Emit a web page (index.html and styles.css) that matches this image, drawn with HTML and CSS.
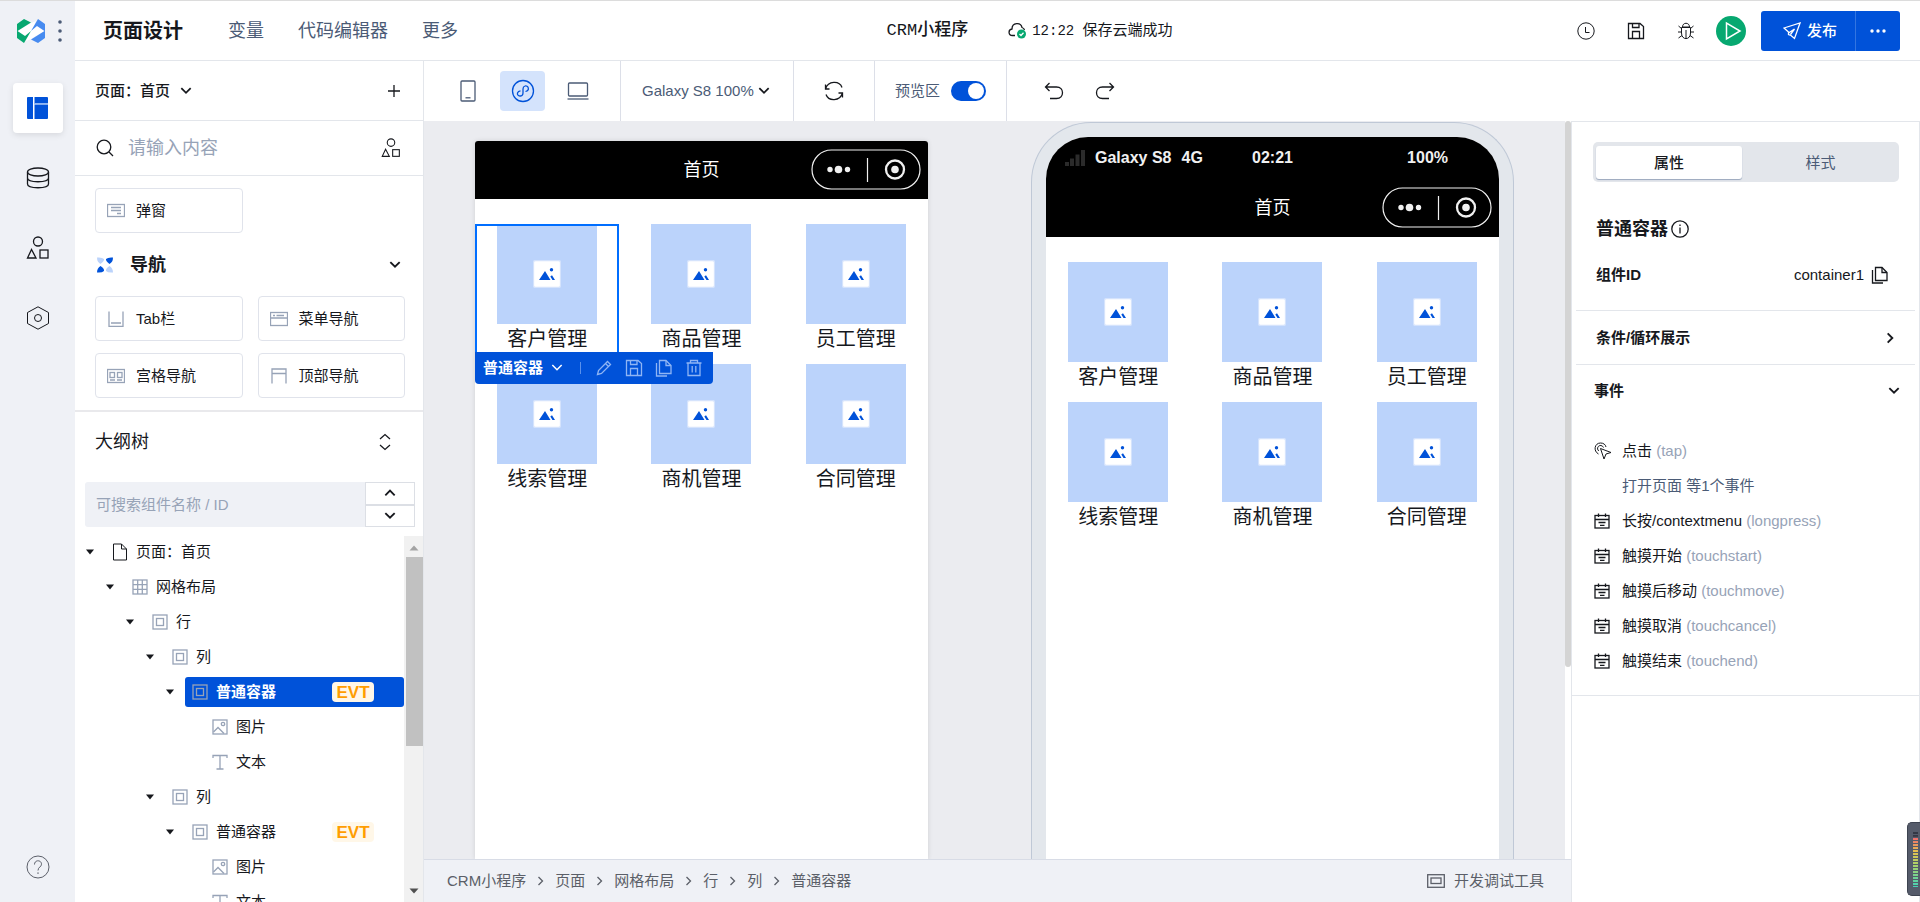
FILE: index.html
```html
<!DOCTYPE html>
<html lang="zh-CN">
<head>
<meta charset="utf-8">
<title>页面设计 - CRM小程序</title>
<link rel="stylesheet" href="styles.css">
</head>
<body>
<svg class="sprite" aria-hidden="true">
  <symbol id="chev-down" viewBox="0 0 12 12"><path d="M2 3.5 6 7.5 10 3.5"/></symbol>
  <symbol id="chev-up" viewBox="0 0 12 12"><path d="M2 8 6 4 10 8"/></symbol>
  <symbol id="chev-right" viewBox="0 0 12 12"><path d="M4 2 8 6 4 10"/></symbol>
  <symbol id="caret" viewBox="0 0 10 6"><path d="M1 0.5h8L5 5.5z" fill="currentColor" stroke="none"/></symbol>
  <symbol id="shapes" viewBox="0 0 24 24"><circle cx="12" cy="5.5" r="4.5"/><path d="M5.500 13.500 1.500 22h8.500z"/><rect x="14" y="14" width="8" height="8"/></symbol>
  <symbol id="save" viewBox="0 0 18 18"><path d="M1.500 1.500H13L16.500 4.500V16.500H1.500z"/><path d="M5.500 1.500V5.500H12V1.500M5.500 16.500V9.500H12.500V16.500"/></symbol>
  <symbol id="copy" viewBox="0 0 18 18"><path d="M4.500 1.500H11L16 6.500V14.500H4.500z"/><path d="M11 1.500V6.500H16M1.500 4V17H12"/></symbol>
  <symbol id="box" viewBox="0 0 16 16"><rect x="1" y="1" width="14" height="14"/><rect x="4.500" y="4.500" width="7" height="7"/></symbol>
  <symbol id="grid" viewBox="0 0 16 16"><rect x="1" y="1" width="14" height="14"/><path d="M5.700 1V15M10.300 1V15M1 5.700H15M1 10.300H15"/></symbol>
  <symbol id="file" viewBox="0 0 16 18"><path d="M1.500 1H9.500L14.500 6V17H1.500z"/><path d="M9.500 1V6H14.500"/></symbol>
  <symbol id="image" viewBox="0 0 16 16"><rect x="1" y="1" width="14" height="14"/><circle cx="11" cy="5" r="1.700"/><path d="M1.500 13 6 8.500 12 14.500"/></symbol>
  <symbol id="letter" viewBox="0 0 16 16"><path d="M1 4V1.500H15V4M8 1.500V15M4.500 15H11.500"/></symbol>
  <symbol id="calendar" viewBox="0 0 16 16"><rect x="1" y="2.500" width="14" height="12.500"/><path d="M1 6.500H15M4.500 0.500V4M11.500 0.500V4M4.500 9.500H11.500M6 12.300H10.500"/></symbol>
  <symbol id="photo" viewBox="0 0 28 28"><rect x="0.500" y="0.500" width="27" height="27" rx="2" fill="#fff" stroke="#d5e3fc"/><path d="M6 20 12 11 17.500 20zM17.300 16.500 19 15.200 22 20H19.500z" fill="#0052d9" stroke="none"/><circle cx="18.500" cy="9.800" r="1.700" fill="#0052d9" stroke="none"/></symbol>
  <symbol id="capsule" viewBox="0 0 110 42"><rect x="1" y="1" width="108" height="39" rx="19.500" stroke-width="1.200"/><path d="M56.500 9V33" stroke-width="1.200"/><g fill="currentColor" stroke="none"><circle cx="19" cy="20.500" r="2.700"/><circle cx="27.500" cy="20.500" r="3.800"/><circle cx="36.500" cy="20.500" r="2.700"/><circle cx="84" cy="20.500" r="3.800"/></g><circle cx="84" cy="20.500" r="9" stroke-width="2.300"/></symbol>
</svg>

<div class="app">
  <nav class="rail" aria-label="主导航">
    <div class="brand">
      <svg class="logo" viewBox="0 0 28 24"><path d="M0.500 12 14 4 19 2 17 7 20 7 27.500 12 14 20 9 22 11 17 8 17z" fill="#fff"/><path d="M0 5 7 0 14 3.500 0.500 12 8 17 14 12 7 24 0 19z" fill="#07a870"/><path d="M28 19 21 24 14 20.500 27.500 12 20 7 14 12 21 0 28 5z" fill="#478bf0"/></svg>
      <button class="plain" aria-label="菜单"><svg class="dots" viewBox="0 0 4 22"><circle cx="2" cy="2" r="1.800"/><circle cx="2" cy="11" r="1.800"/><circle cx="2" cy="20" r="1.800"/></svg></button>
    </div>
    <button class="tile tile-active" aria-label="页面设计"><svg class="i22" viewBox="0 0 22 22"><g fill="#0052d9" stroke="none"><path d="M1 0H6V22H1Q0 22 0 21V1Q0 0 1 0z"/><path d="M7.500 0H20Q21 0 21 1V6H7.500z"/><path d="M7.500 7.500H21V21Q21 22 20 22H7.500z"/></g><path d="M7 6.700H21" stroke="#8bb3f3"/></svg></button>
    <button class="tile" aria-label="数据"><svg class="i24" viewBox="0 0 24 24"><ellipse cx="12" cy="6" rx="10.500" ry="4"/><path d="M1.500 6V18C1.500 23 22.500 23 22.500 18V6M1.500 12C1.500 17 22.500 17 22.500 12"/></svg></button>
    <button class="tile" aria-label="组件"><svg class="i24"><use href="#shapes"/></svg></button>
    <button class="tile" aria-label="设置"><svg class="i24 thin" viewBox="0 0 24 24"><path d="M12 0.800 22.500 6.500V17.500L12 23.200 1.500 17.500V6.500z"/><circle cx="12" cy="12" r="3.500"/></svg></button>
    <button class="tile rail-help" aria-label="帮助"><svg class="i24 thin" viewBox="0 0 24 24"><circle cx="12" cy="12" r="11"/><path d="M8.500 9.500C8.500 4.500 15.500 4.700 15.500 9.200 15.500 12 12 12 12 15.500M12 17.300V19"/></svg></button>
  </nav>

  <header class="topbar">
    <h1 class="app-title">页面设计</h1>
    <nav class="menu"><a href="#">变量</a><a href="#">代码编辑器</a><a href="#">更多</a></nav>
    <div class="status">
      <strong class="app-name">CRM小程序</strong>
      <svg class="cloud" viewBox="0 0 18 17"><path d="M7 13.500H4.500C0 13.500 0 7.500 4 7 4 0 13 0 14 5.500 15.500 6 16.300 7 16.500 8"/><circle cx="13.500" cy="12" r="4.500" fill="#07a870" stroke="none"/><path d="M11.500 12 13 13.500 15.500 10.800" stroke="#fff"/></svg>
      <span class="saved"><time>12:22</time> 保存云端成功</span>
    </div>
    <div class="actions">
      <button class="plain" aria-label="历史"><svg class="i18 thin" viewBox="0 0 18 18"><circle cx="9" cy="9" r="8.200"/><path d="M8.500 5V10.500H12.500"/></svg></button>
      <button class="plain" aria-label="保存"><svg class="i18"><use href="#save"/></svg></button>
      <button class="plain" aria-label="调试"><svg class="i18 thin" viewBox="0 0 18 18"><path d="M5.500 5C5.500 0 12.500 0 12.500 5zM4.500 5.500H13.500V11C13.500 18.500 4.500 18.500 4.500 11zM9 8V16M4.500 10H1M13.500 10H17M4.500 6.500 1.500 4M13.500 6.500 16.500 4M5 13.500 1.500 16M13 13.500 16.500 16"/></svg></button>
      <button class="plain run" aria-label="运行"><svg class="play" viewBox="0 0 30 30"><circle cx="15" cy="15" r="15" fill="#07a870" stroke="none"/><path d="M10.500 7V23L24 15z" stroke="#fff" stroke-width="1.500"/></svg></button>
      <div class="publish">
        <button class="publish-main"><svg class="i18" viewBox="0 0 18 18"><path d="M1 6 17 1 11.500 16.500 8 13.500 5.500 12.500V10zM5.500 11 11.500 7 7.500 12.500"/></svg>发布</button>
        <button class="publish-more" aria-label="更多发布选项"><svg viewBox="0 0 16 4"><circle cx="2" cy="2" r="1.700"/><circle cx="8" cy="2" r="1.700"/><circle cx="14" cy="2" r="1.700"/></svg></button>
      </div>
    </div>
  </header>

  <aside class="side">
    <div class="page-row">
      <label class="picker picker-bold"><select aria-label="页面"><option>页面：首页</option></select><svg class="i14"><use href="#chev-down"/></svg></label>
      <button class="plain" aria-label="新建页面"><svg class="i14" viewBox="0 0 14 14"><path d="M7 1V13M1 7H13"/></svg></button>
    </div>
    <div class="find-row">
      <svg class="i18" viewBox="0 0 18 18"><circle cx="8" cy="8" r="6.800"/><path d="M13 13 17 17"/></svg>
      <input type="text" aria-label="搜索组件" placeholder="请输入内容">
      <button class="plain" aria-label="组件库"><svg class="i20"><use href="#shapes"/></svg></button>
    </div>
    <div class="library">
      <div class="cards">
        <button class="card"><svg viewBox="0 0 18 16"><rect x="0.500" y="1.500" width="17" height="12"/><path d="M4 4.500H14M4 7.500H14M10 10.500H14"/></svg>弹窗</button>
      </div>
      <div class="group">
        <svg class="group-icon" viewBox="0 0 16 16"><path d="M0 0.500Q5 0 7 2 7.500 4 3.500 7 0 5 0 0.500z" fill="#bbd3fb"/><path d="M16 0.500Q11 0 9 2 8.500 4 12.500 7 16 5 16 0.500zM0 15.500Q0 11 3.500 9 7.500 11.500 7 14 5 16 0 15.500z" fill="#0052d9"/><path d="M16 15.500Q16 11 12.500 9 8.500 11.500 9 14 11 16 16 15.500z" fill="#bbd3fb"/></svg>
        <h2>导航</h2>
        <button class="plain" aria-label="折叠导航"><svg class="i14"><use href="#chev-down"/></svg></button>
      </div>
      <div class="cards">
        <button class="card"><svg viewBox="0 0 18 16"><path d="M2 0.500V15.500H16V0.500M4 12H14"/></svg>Tab栏</button>
        <button class="card"><svg viewBox="0 0 18 16"><rect x="0.500" y="1.500" width="17" height="13"/><path d="M0.500 7H17.500M3 4.500H5M6.500 4.500H14"/></svg>菜单导航</button>
        <button class="card"><svg viewBox="0 0 18 16"><rect x="0.500" y="1.500" width="17" height="13"/><rect x="3" y="4.500" width="4.500" height="5"/><rect x="10.500" y="4.500" width="4.500" height="5"/><path d="M3 12H8M10 12H15"/></svg>宫格导航</button>
        <button class="card"><svg viewBox="0 0 18 16"><path d="M2 15.500V1H16V15.500M2 5.500H16"/></svg>顶部导航</button>
        <button class="card" aria-label="侧边导航"></button>
        <button class="card" aria-label="步骤导航"></button>
      </div>
    </div>
    <div class="outline-head">
      <h2>大纲树</h2>
      <button class="plain" aria-label="展开或收起"><svg class="i18" viewBox="0 0 18 18"><path d="M4 6 9 1.500 14 6M4 12 9 16.500 14 12"/></svg></button>
    </div>
    <div class="outline-find">
      <input type="text" aria-label="搜索大纲" placeholder="可搜索组件名称 / ID">
      <div class="stepper">
        <button aria-label="上一个"><svg class="i14"><use href="#chev-up"/></svg></button>
        <button aria-label="下一个"><svg class="i14"><use href="#chev-down"/></svg></button>
      </div>
    </div>
    <div class="outline-body">
      <ul class="tree" role="tree">
        <li class="node lv1" role="treeitem"><svg class="caret"><use href="#caret"/></svg><span class="leaf dark"><svg><use href="#file"/></svg>页面：首页</span></li>
        <li class="node lv2" role="treeitem"><svg class="caret"><use href="#caret"/></svg><span class="leaf"><svg><use href="#grid"/></svg>网格布局</span></li>
        <li class="node lv3" role="treeitem"><svg class="caret"><use href="#caret"/></svg><span class="leaf"><svg><use href="#box"/></svg>行</span></li>
        <li class="node lv4" role="treeitem"><svg class="caret"><use href="#caret"/></svg><span class="leaf"><svg><use href="#box"/></svg>列</span></li>
        <li class="node lv5" role="treeitem" aria-selected="true"><svg class="caret"><use href="#caret"/></svg><span class="leaf selected"><svg><use href="#box"/></svg>普通容器<b class="evt">EVT</b></span></li>
        <li class="node lv6" role="treeitem"><span class="caret"></span><span class="leaf"><svg><use href="#image"/></svg>图片</span></li>
        <li class="node lv6" role="treeitem"><span class="caret"></span><span class="leaf"><svg><use href="#letter"/></svg>文本</span></li>
        <li class="node lv4" role="treeitem"><svg class="caret"><use href="#caret"/></svg><span class="leaf"><svg><use href="#box"/></svg>列</span></li>
        <li class="node lv5" role="treeitem"><svg class="caret"><use href="#caret"/></svg><span class="leaf"><svg><use href="#box"/></svg>普通容器<b class="evt">EVT</b></span></li>
        <li class="node lv6" role="treeitem"><span class="caret"></span><span class="leaf"><svg><use href="#image"/></svg>图片</span></li>
        <li class="node lv6" role="treeitem"><span class="caret"></span><span class="leaf"><svg><use href="#letter"/></svg>文本</span></li>
      </ul>
      <div class="scroll" aria-hidden="true">
        <svg class="scroll-arrow" viewBox="0 0 10 6"><path d="M5 0.500 9.500 5.500H0.500z" fill="#a3a3a3"/></svg>
        <div class="scroll-thumb"></div>
        <svg class="scroll-arrow scroll-end" viewBox="0 0 10 6"><path d="M0.500 0.500H9.500L5 5.500z" fill="#505050"/></svg>
      </div>
    </div>
  </aside>

  <div class="toolbar">
    <div class="tools devices">
      <button class="device-btn" aria-label="手机"><svg class="i24" viewBox="0 0 24 24"><rect x="5" y="2" width="14" height="20" rx="1"/><path d="M9.500 18.800H14.500"/></svg></button>
      <button class="device-btn device-on" aria-label="小程序"><svg class="i24" viewBox="0 0 24 24"><circle cx="12" cy="12" r="10.500"/><path d="M14.500 12.500C19.500 11 17 6 14 7 12 7.600 12 9 12 10V14C12 18.500 5.500 17.500 6.500 14 7 12.500 8 12 9.500 11.800"/></svg></button>
      <button class="device-btn" aria-label="桌面"><svg class="i24" viewBox="0 0 24 24"><rect x="2.500" y="4" width="19" height="13" rx="1"/><path d="M1.500 20H22.500"/></svg></button>
    </div>
    <div class="tools zoom"><label class="picker"><select aria-label="机型与缩放"><option>Galaxy S8 100%</option></select><svg class="i14"><use href="#chev-down"/></svg></label></div>
    <div class="tools refresh"><button class="plain" aria-label="刷新"><svg class="i20" viewBox="0 0 20 20"><path d="M1.500 8C4 -0.500 15.500 -0.500 18 6.500M1.500 3.500V8H5.500M18.500 12C16 20.500 4.500 20.500 2 13.500M18.500 16.500V12H14.500"/></svg></button></div>
    <div class="tools"><label class="preview">预览区<input class="switch" type="checkbox" role="switch" checked></label></div>
    <div class="tools history">
      <button class="plain" aria-label="撤销"><svg class="i20" viewBox="0 0 20 20"><path d="M5.500 2 1.500 6 5.500 10M1.500 6H12.500C20.500 6 20.500 17.500 12.500 17.500H6"/></svg></button>
      <button class="plain" aria-label="重做"><svg class="i20" viewBox="0 0 20 20"><path d="M14.500 2 18.500 6 14.500 10M18.500 6H7.500C-0.500 6 -0.500 17.500 7.500 17.500H14"/></svg></button>
    </div>
  </div>

  <main class="canvas">
    <div class="stage">
      <section class="screen editor">
        <div class="nav"><span>首页</span><svg class="capsule"><use href="#capsule"/></svg></div>
        <div class="apps">
          <div class="app-item picked"><div class="pic"><svg><use href="#photo"/></svg></div>客户管理
            <div class="float-bar">
              <button class="float-name">普通容器<svg class="i14"><use href="#chev-down"/></svg></button>
              <span class="float-sep"></span>
              <button class="plain" aria-label="编辑"><svg class="i18" viewBox="0 0 18 18"><path d="M2.500 15.500 3.500 11.500 12.500 2.500 15.500 5.500 6.500 14.500zM10.500 4.500 13.500 7.500"/></svg></button>
              <button class="plain" aria-label="保存组件"><svg class="i18"><use href="#save"/></svg></button>
              <button class="plain" aria-label="复制"><svg class="i18"><use href="#copy"/></svg></button>
              <button class="plain" aria-label="删除"><svg class="i18" viewBox="0 0 18 18"><path d="M1.500 4H16.500M5.500 4V1.500H12.500V4M3 4V16.500H15V4M7.200 7V13.500M10.800 7V13.500"/></svg></button>
            </div>
          </div>
          <div class="app-item"><div class="pic"><svg><use href="#photo"/></svg></div>商品管理</div>
          <div class="app-item"><div class="pic"><svg><use href="#photo"/></svg></div>员工管理</div>
          <div class="app-item"><div class="pic"><svg><use href="#photo"/></svg></div>线索管理</div>
          <div class="app-item"><div class="pic"><svg><use href="#photo"/></svg></div>商机管理</div>
          <div class="app-item"><div class="pic"><svg><use href="#photo"/></svg></div>合同管理</div>
        </div>
      </section>
      <section class="phone">
        <div class="screen">
          <div class="phone-status">
            <span class="carrier"><svg viewBox="0 0 20 16"><path d="M0 12h4v4H0zM5 8.500h4V16H5zM10.500 4.500h4V16h-4zM16 0h4v16h-4z" fill="#2b2b2b"/></svg>Galaxy S8<span>4G</span></span>
            <span>02:21</span>
            <span class="battery">100%</span>
          </div>
          <div class="nav"><span>首页</span><svg class="capsule"><use href="#capsule"/></svg></div>
          <div class="apps">
            <div class="app-item"><div class="pic"><svg><use href="#photo"/></svg></div>客户管理</div>
            <div class="app-item"><div class="pic"><svg><use href="#photo"/></svg></div>商品管理</div>
            <div class="app-item"><div class="pic"><svg><use href="#photo"/></svg></div>员工管理</div>
            <div class="app-item"><div class="pic"><svg><use href="#photo"/></svg></div>线索管理</div>
            <div class="app-item"><div class="pic"><svg><use href="#photo"/></svg></div>商机管理</div>
            <div class="app-item"><div class="pic"><svg><use href="#photo"/></svg></div>合同管理</div>
          </div>
        </div>
      </section>
    </div>
    <div class="stage-scroll" aria-hidden="true"><div class="stage-thumb"></div></div>
  </main>

  <footer class="footer">
    <nav class="crumbs" aria-label="面包屑">
      <a href="#">CRM小程序</a><svg><use href="#chev-right"/></svg>
      <a href="#">页面</a><svg><use href="#chev-right"/></svg>
      <a href="#">网格布局</a><svg><use href="#chev-right"/></svg>
      <a href="#">行</a><svg><use href="#chev-right"/></svg>
      <a href="#">列</a><svg><use href="#chev-right"/></svg>
      <a href="#">普通容器</a>
    </nav>
    <button class="devtools"><svg viewBox="0 0 18 14"><rect x="0.700" y="0.700" width="16.600" height="12.600"/><rect x="4" y="4" width="10" height="5.500"/></svg>开发调试工具</button>
  </footer>

  <aside class="props">
    <div class="tabs" role="tablist"><button class="tab tab-on" role="tab">属性</button><button class="tab" role="tab">样式</button></div>
    <h2 class="props-title">普通容器<svg class="i18" viewBox="0 0 18 18"><circle cx="9" cy="9" r="8.200"/><path d="M9 7.500V13.500M9 4.500V6"/></svg></h2>
    <div class="id-row"><b>组件ID</b><span>container1</span><button class="plain" aria-label="复制ID"><svg class="i18"><use href="#copy"/></svg></button></div>
    <button class="fold fold-lined">条件/循环展示<svg class="i14"><use href="#chev-right"/></svg></button>
    <button class="fold">事件<svg class="i14"><use href="#chev-down"/></svg></button>
    <ul class="events">
      <li><svg class="tap" viewBox="0 0 18 18"><path d="M6.500 6.500 17 10.500 12 12 10 17z"/><path d="M4.500 12C-1 9 0.500 1 6.500 1 9.500 1 11.500 2.500 12 5M4.800 9C2 6.500 4.500 3 7 3.500 8.300 3.700 9 4.500 9.500 5.500"/></svg><span>点击 <em>(tap)</em></span></li>
      <li><span class="blank"></span><a href="#">打开页面 等1个事件</a></li>
      <li><svg><use href="#calendar"/></svg><span>长按/contextmenu <em>(longpress)</em></span></li>
      <li><svg><use href="#calendar"/></svg><span>触摸开始 <em>(touchstart)</em></span></li>
      <li><svg><use href="#calendar"/></svg><span>触摸后移动 <em>(touchmove)</em></span></li>
      <li><svg><use href="#calendar"/></svg><span>触摸取消 <em>(touchcancel)</em></span></li>
      <li><svg><use href="#calendar"/></svg><span>触摸结束 <em>(touchend)</em></span></li>
    </ul>
  </aside>
</div>
<div class="meter" aria-hidden="true"><div class="meter-bars"></div></div>
</body>
</html>
```

FILE: styles.css
```css
:root {
  --blue: #0052d9;
  --line: #e3e6eb;
  --panel: #eff1f6;
  --text: #16181d;
  --muted: #4b5b76;
  --faint: #97a3b7;
}

* { box-sizing: border-box; }

body {
  margin: 0;
  font: 15px/20px "Liberation Sans", "Noto Sans CJK SC", sans-serif;
  color: var(--text);
  background: #fff;
}

button, input, select { font: inherit; color: inherit; margin: 0; }
button { border: 0; padding: 0; background: none; cursor: pointer; }
a { color: inherit; text-decoration: none; }
ul { list-style: none; margin: 0; padding: 0; }
h1, h2 { margin: 0; }
svg { display: block; flex: none; fill: none; stroke: currentColor; stroke-width: 1.3; }
.sprite { position: absolute; width: 0; height: 0; }
.plain { display: flex; align-items: center; justify-content: center; }
.thin { stroke-width: 1; }
.i14 { width: 14px; height: 14px; }
.i18 { width: 18px; height: 18px; }
.i20 { width: 20px; height: 20px; }
.i22 { width: 22px; height: 22px; }
.i24 { width: 24px; height: 24px; }

.app {
  display: grid;
  grid-template: 60px 60px minmax(0, 1fr) 43px / 75px 349px minmax(0, 1fr) 349px;
  grid-template-areas:
    "rail top top top"
    "rail side tools tools"
    "rail side canvas props"
    "rail side foot props";
  height: 100vh;
  border-top: 1px solid #dcdcdc;
  overflow: hidden;
}

/* Rail */
.rail {
  grid-area: rail;
  display: flex;
  flex-direction: column;
  align-items: center;
  gap: 20px;
  padding-bottom: 10px;
  background: var(--panel);
}
.brand { display: flex; align-items: center; gap: 13px; width: 100%; height: 62px; padding: 0 0 2px 17px; }
.logo { width: 28px; height: 24px; stroke: none; }
.dots { width: 4px; height: 22px; fill: var(--muted); stroke: none; }
.tile { display: grid; place-items: center; width: 50px; height: 50px; border-radius: 4px; }
.tile-active { background: #fff; box-shadow: 0 2px 6px #0000001a; }
.rail-help { margin-top: auto; color: #5c606a; }

/* Top bar */
.topbar {
  grid-area: top;
  display: flex;
  align-items: center;
  padding: 0 20px 0 28px;
  border-bottom: 1px solid var(--line);
}
.app-title { font-size: 20px; line-height: 28px; }
.menu { display: flex; gap: 34px; margin-left: 45px; font-size: 18px; color: var(--muted); }
.status { display: flex; align-items: center; margin: 0 auto; padding-left: 24px; }
.app-name { margin-right: 40px; font: 500 17px/20px "Liberation Mono", "Noto Sans CJK SC", monospace; }
.cloud { width: 18px; height: 17px; margin-right: 6px; }
.saved time { margin-right: 4px; font: 14px/20px "Liberation Mono", monospace; }
.actions { display: flex; align-items: center; gap: 32px; }
.play { width: 30px; height: 30px; }
.run { margin: 0 -17px 0 -11px; }
.publish { display: flex; height: 40px; border-radius: 3px; background: var(--blue); color: #fff; }
.publish-main { display: flex; align-items: center; gap: 6px; padding: 0 18px 0 22px; font-weight: 500; }
.publish-more { display: grid; place-items: center; width: 45px; border-left: 1px solid #3375e1; }
.publish-more svg { width: 16px; height: 4px; fill: #fff; stroke: none; }

/* Left panel */
.side {
  grid-area: side;
  display: flex;
  flex-direction: column;
  min-height: 0;
  border-right: 1px solid var(--line);
}
.page-row, .find-row, .outline-head { display: flex; align-items: center; flex: none; }
.page-row { justify-content: space-between; height: 60px; padding: 0 22px 0 20px; border-bottom: 1px solid var(--line); }
.picker { display: flex; align-items: center; color: var(--muted); }
.picker select { appearance: none; border: 0; padding: 0; background: none; }
.picker svg { color: var(--text); stroke-width: 1.5; }
.picker-bold { gap: 8px; color: var(--text); font-weight: 500; }
.find-row { gap: 14px; height: 55px; padding: 0 22px 0 21px; border-bottom: 1px solid var(--line); }
.find-row input { flex: 1; min-width: 0; border: 0; padding: 0; font-size: 18px; outline: 0; }
input::placeholder { color: var(--faint); opacity: 1; }
.library { height: 236px; flex: none; overflow: hidden; padding: 12px 18px 0 20px; border-bottom: 2px solid #e9e9ec; }
.cards { display: grid; grid-template-columns: 1fr 1fr; gap: 12px 15px; }
.card { display: flex; align-items: center; gap: 11px; height: 45px; padding: 0 11px; border: 1px solid #e0e3eb; border-radius: 4px; }
.card svg { width: 18px; height: 16px; color: var(--faint); }
.group { display: flex; align-items: center; height: 63px; padding: 0 3px 0 2px; }
.group h2 { flex: 1; margin-left: 17px; font-size: 18px; }
.group-icon { width: 16px; height: 16px; stroke: none; }
.outline-head { justify-content: space-between; height: 60px; padding: 0 29px 0 20px; }
.outline-head h2 { font-size: 18px; font-weight: 400; }
.outline-find { display: flex; flex: none; height: 45px; margin: 10px 8px 0 10px; }
.outline-find input { flex: 1; min-width: 0; border: 0; padding: 0 11px; border-radius: 3px 0 0 3px; background: var(--panel); outline: 0; }
.stepper { display: grid; grid-template-rows: 1fr 1fr; width: 50px; }
.stepper button { display: grid; place-items: center; border: 1px solid #dcdfe5; }
.outline-body { display: flex; flex: 1; min-height: 0; margin-top: 9px; overflow: hidden; }
.tree { flex: 1; min-width: 0; margin-top: -2px; overflow: hidden; }
.node { display: flex; align-items: center; height: 35px; }
.caret { width: 10px; height: 6px; margin-right: 10px; flex: none; }
.leaf { display: flex; align-items: center; flex: 1; gap: 8px; height: 30px; padding-left: 7px; border-radius: 3px; }
.leaf svg { width: 16px; height: 18px; color: var(--faint); }
.leaf.dark svg { color: var(--text); stroke-width: 1; }
.leaf.selected { background: var(--blue); color: #fff; font-weight: 700; }
.evt { width: 42px; height: 20px; margin: 0 30px 0 auto; border-radius: 4px; background: #fff7e8; color: #ff9d00; font-size: 17px; line-height: 22px; text-align: center; }
.lv1 { padding-left: 10px; }
.lv2 { padding-left: 30px; }
.lv3 { padding-left: 50px; }
.lv4 { padding-left: 70px; }
.lv5 { padding-left: 90px; }
.lv6 { padding-left: 110px; }
.scroll { display: flex; flex-direction: column; align-items: center; width: 19px; padding: 9px 0 8px; background: #f1f1f1; }
.scroll-arrow { width: 10px; height: 6px; stroke: none; }
.scroll-thumb { align-self: flex-end; width: 17px; height: 189px; margin-top: 6px; background: #c1c1c1; }
.scroll-end { margin-top: auto; }

/* Canvas toolbar */
.toolbar { grid-area: tools; display: flex; }
.tools { display: flex; align-items: center; padding: 0 20px; border-right: 1px solid #dcdfe8; }
.devices { gap: 10px; padding: 0 20px 0 21px; color: var(--muted); }
.device-btn { display: grid; place-items: center; width: 45px; height: 40px; border-radius: 4px; }
.device-on { background: #d4e3fc; color: var(--blue); }
.zoom { padding: 0 22px 0 21px; }
.zoom .picker { gap: 3px; }
.refresh { padding: 0 30px; }
.preview { display: flex; align-items: center; gap: 11px; color: var(--muted); }
.switch { appearance: none; display: flex; justify-content: flex-end; width: 35px; height: 20px; padding: 2px; border-radius: 10px; background: var(--blue); }
.switch::before { content: ""; width: 16px; height: 16px; border-radius: 50%; background: #fff; }
.history { gap: 31px; padding: 0 37px; border-right: 0; }

/* Canvas */
.canvas { grid-area: canvas; display: flex; min-height: 0; background: #ebecf0; overflow: hidden; }
.stage { display: flex; flex: 1; min-width: 0; align-items: stretch; justify-content: space-between; padding: 1px 51px 0; }
.screen { width: 453px; background: #fff; }
.editor { margin-top: 19px; border-radius: 3px 3px 0 0; box-shadow: 0 0 5px #0000001f; }
.nav { display: grid; grid-template-columns: 1fr auto 1fr; align-items: center; height: 58px; padding: 0 7px; background: #000; color: #fff; font-size: 18px; border-radius: 3px 3px 0 0; }
.nav span { grid-column: 2; }
.capsule { width: 110px; height: 42px; justify-self: end; color: #f0f0f0; }
.apps { display: grid; grid-template-columns: repeat(3, 1fr); gap: 10px; padding-top: 25px; font-size: 20px; line-height: 30px; text-align: center; }
.app-item { position: relative; height: 130px; }
.pic { display: grid; place-items: center; width: 100px; height: 100px; margin: 0 auto; background: #bbd3fb; }
.pic svg { width: 28px; height: 28px; }
.picked { outline: 2px solid #006eff; outline-offset: -2px; }
.float-bar {
  position: absolute;
  z-index: 2;
  left: 0;
  top: 128px;
  display: flex;
  align-items: center;
  gap: 12px;
  height: 32px;
  padding: 0 10px 0 8px;
  border-radius: 0 0 4px 4px;
  background: var(--blue);
  color: #8fb5f4;
  font-size: 15px;
  line-height: 20px;
}
.float-name { display: flex; align-items: center; gap: 7px; color: #fff; font-weight: 700; white-space: nowrap; }
.float-sep { width: 1px; height: 12px; margin: 0 2px 0 4px; background: #5a91ec; }
.phone { padding: 14px 14px 0; border: 1px solid #bfc8d6; border-bottom: 0; border-radius: 60px 60px 0 0; background: #e3e7ec; }
.phone .screen { height: 100%; border-radius: 42px 42px 0 0; overflow: hidden; }
.phone .nav { border-radius: 0; }
.phone-status { display: grid; grid-template-columns: minmax(0, 1fr) auto minmax(0, 1fr); align-items: center; height: 42px; padding: 0 19px; background: #000; color: #f0f0f0; font-size: 16px; font-weight: 700; }
.carrier { display: flex; align-items: center; gap: 10px; white-space: nowrap; }
.carrier svg { width: 20px; height: 16px; stroke: none; }
.battery { justify-self: end; margin-right: 32px; }
.stage-scroll { width: 6px; background: #fff; }
.stage-thumb { height: 74%; border-radius: 3px; background: #d4d4d4; }

/* Footer */
.footer { grid-area: foot; display: flex; align-items: center; justify-content: space-between; padding: 0 27px 0 23px; border-top: 1px solid #d8dce6; background: var(--panel); color: #5b5f68; }
.crumbs { display: flex; align-items: center; gap: 8px; }
.crumbs svg { width: 13px; height: 12px; }
.devtools { display: flex; align-items: center; gap: 9px; }
.devtools svg { width: 18px; height: 14px; }

/* Properties */
.props { grid-area: props; border: solid var(--line); border-width: 1px 1px 0; padding-top: 20px; background: #fff; }
.tabs { display: grid; grid-template-columns: 146fr 157fr; height: 40px; margin: 0 20px 0 21px; padding: 4px 0 3px 3px; border-radius: 5px; background: var(--line); }
.tab { color: var(--muted); }
.tab-on { border-radius: 3px; background: #fff; color: var(--text); box-shadow: 0 1px 1px #9aa7bd; font-weight: 500; }
.props-title { display: flex; align-items: center; gap: 3px; margin: 35px 24px 0; font-size: 18px; line-height: 24px; }
.id-row { display: flex; align-items: center; gap: 7px; height: 20px; margin: 24px 30px 25px 24px; }
.id-row b { margin-right: auto; }
.fold { display: flex; align-items: center; justify-content: space-between; width: 100%; height: 51px; padding: 0 18px 0 22px; font-weight: 700; }
.fold svg, .stepper svg, .group .plain svg { stroke-width: 1.6; }
.fold-lined { width: calc(100% - 8px); height: 55px; margin: 0 4px; padding: 0 18px 0 20px; border: solid var(--line); border-width: 1px 0; }
.events { padding: 17px 20px 17px 22px; border-bottom: 1px solid var(--line); }
.events li { display: flex; align-items: center; gap: 12px; height: 35px; }
.events svg, .blank { width: 16px; height: 16px; flex: none; }
.events .tap { width: 18px; height: 18px; margin-right: -2px; stroke-width: 1; }
.events em { font-style: normal; color: var(--faint); }
.events a { color: var(--muted); }

/* Level meter docked to the window edge */
.meter { position: fixed; right: 0; bottom: 6px; width: 13px; height: 74px; padding: 9px 2px 8px 5px; border: 1px solid #3d4350; border-right: 0; border-radius: 5px 0 0 5px; background: #555b6a; }
.meter-bars { height: 100%; background: repeating-linear-gradient(transparent 0 2px, #555b6a 2px 3px), linear-gradient(#333845 8%, #f0696f 10%, #e5c04f 35%, #a9d36a 60%, #45d2b5); }
```
